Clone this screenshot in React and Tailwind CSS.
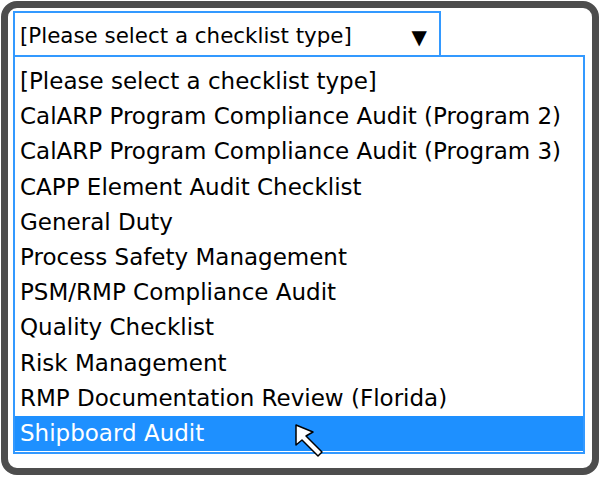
import React from 'react';

const options = [
  '[Please select a checklist type]',
  'CalARP Program Compliance Audit (Program 2)',
  'CalARP Program Compliance Audit (Program 3)',
  'CAPP Element Audit Checklist',
  'General Duty',
  'Process Safety Management',
  'PSM/RMP Compliance Audit',
  'Quality Checklist',
  'Risk Management',
  'RMP Documentation Review (Florida)',
  'Shipboard Audit',
];

function Cursor() {
  return (
    <svg width="34" height="36" viewBox="0 0 34 36" className="absolute left-[279px] top-[7px]">
      <path d="M2 2 L2 22 L8 17 L24 33 L28 29 L12 13 L19 9 Z" fill="white" stroke="black" strokeWidth="1.5" strokeLinejoin="round" />
    </svg>
  );
}

export default function App() {
  return (
    <div className="w-[600px] h-[477px] bg-white p-px" style={{ fontFamily: '"DejaVu Sans", sans-serif' }}>
      <div className="h-[474px] w-[598px] border-[7px] border-[#4d4d4d] rounded-[16px] pl-[5px] pt-[3px]">
        {/* select box */}
        <div className="w-[428px] h-[46px] border-2 border-[#3399ff] flex items-center justify-between pl-[5px] pr-[12px] pt-[5px] text-[21.4px] text-black">
          <span>[Please select a checklist type]</span>
          <span className="text-[20px]">▼</span>
        </div>
        {/* dropdown list */}
        <div className="w-[572px] -mt-[2px] border-2 border-[#3399ff] pt-[7px] pb-[1px]">
          {options.map((o, i) => {
            const sel = i === options.length - 1;
            return (
              <div
                key={o}
                className={`relative h-[35.2px] flex items-center pl-[5px] text-[23px] leading-none whitespace-nowrap ${sel ? 'bg-[#1e90ff] text-white' : 'text-black'}`}
              >
                {o}
                {sel && <Cursor />}
              </div>
            );
          })}
        </div>
      </div>
    </div>
  );
}
